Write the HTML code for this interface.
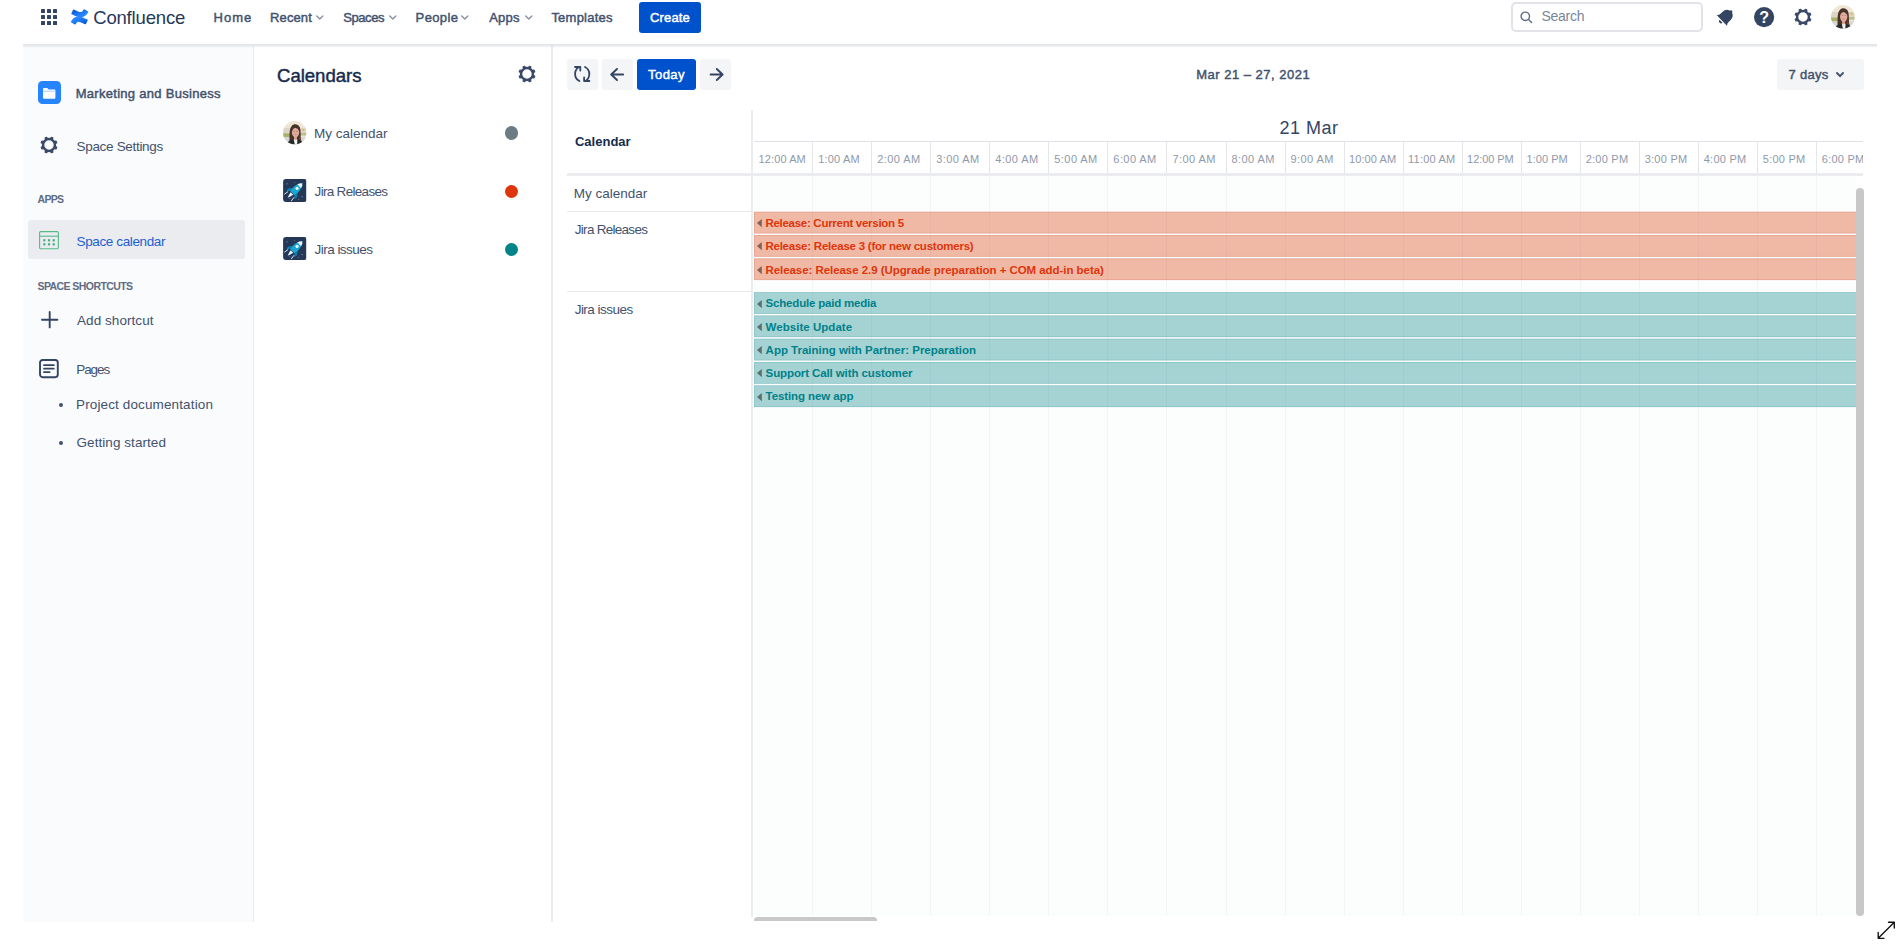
<!DOCTYPE html>
<html lang="en">
<head>
<meta charset="utf-8">
<title>Space calendar - Marketing and Business - Confluence</title>
<style>
*{box-sizing:border-box;margin:0;padding:0}
html,body{width:1901px;height:948px;overflow:hidden;background:#fff}
body{font-family:"Liberation Sans",sans-serif;-webkit-font-smoothing:antialiased}
#app{position:relative;width:1901px;height:948px;overflow:hidden;background:#fff}
#app>*,.abs{position:absolute}
.t{position:absolute;white-space:nowrap;display:block}
svg{position:absolute;display:block;overflow:visible}
.grp{position:absolute;left:0;top:0;width:0;height:0}
/* header */
#topbar{left:23px;top:44px;width:1854px;height:4px;z-index:5;background:linear-gradient(rgba(9,30,66,.115) 0,rgba(9,30,66,.105) 42%,rgba(9,30,66,.055) 62%,rgba(9,30,66,.02) 82%,rgba(9,30,66,0) 100%)}
.btn-primary{background:#0052cc;border-radius:3px}
.btn-subtle{background:#f4f5f7;border-radius:3px}
#search{left:1511px;top:2px;width:192.4px;height:30px;border:2px solid #e1e3e8;border-radius:5px;background:#fff}
/* sidebar */
#sidebar{left:23px;top:46px;width:230.5px;height:875.6px;background:#fafbfc;border-right:1px solid #eaebed}
#sel{left:28px;top:220px;width:216.6px;height:39px;background:#ebecf0;border-radius:3px}
.bullet{width:4px;height:4px;border-radius:50%;background:#42526e}
/* calendars panel */
#calpanel{left:253.5px;top:46px;width:299.5px;height:875.6px;background:#fff;border-right:2px solid #ebecf0}
.dot{width:13.5px;height:13.5px;border-radius:50%}
.appicon{width:24px;height:24px;border-radius:3px;background:#253858;overflow:hidden}
/* grid */
.hl{background:#ebecf0}
.ev{left:753.7px;width:1102.3px;height:21.3px}
.ev.r{background:#f0b8a5}
.ev.g{background:#a4d4d4}
</style>
</head>
<body>
<div id="app">
<svg width="0" height="0" style="left:0;top:0"><defs>
<symbol id="gear" viewBox="-10 -10 20 20" overflow="visible"><circle r="5.95" fill="none" stroke="currentColor" stroke-width="2.45"/><g fill="currentColor"><rect x="-1.55" y="-8.65" width="3.1" height="3" rx=".8" transform="rotate(22.5)"/><rect x="-1.55" y="-8.65" width="3.1" height="3" rx=".8" transform="rotate(67.5)"/><rect x="-1.55" y="-8.65" width="3.1" height="3" rx=".8" transform="rotate(112.5)"/><rect x="-1.55" y="-8.65" width="3.1" height="3" rx=".8" transform="rotate(157.5)"/><rect x="-1.55" y="-8.65" width="3.1" height="3" rx=".8" transform="rotate(202.5)"/><rect x="-1.55" y="-8.65" width="3.1" height="3" rx=".8" transform="rotate(247.5)"/><rect x="-1.55" y="-8.65" width="3.1" height="3" rx=".8" transform="rotate(292.5)"/><rect x="-1.55" y="-8.65" width="3.1" height="3" rx=".8" transform="rotate(337.5)"/></g></symbol>
<symbol id="chev" viewBox="0 0 8 6" overflow="visible"><path d="M0.8 1 L4 4.3 L7.2 1" fill="none" stroke="currentColor" stroke-width="1.5" stroke-linecap="round" stroke-linejoin="round"/></symbol>
<symbol id="rocket" viewBox="0 0 24 24"><rect width="24" height="24" fill="#253858"/>
<g fill="#fff" opacity=".55"><circle cx="4" cy="5" r=".6"/><circle cx="19.5" cy="18" r=".6"/><circle cx="7" cy="20" r=".5"/><circle cx="20" cy="7" r=".5"/><circle cx="12" cy="3.5" r=".4"/><circle cx="16" cy="21" r=".5"/></g>
<g transform="rotate(45 12 12) translate(12 12) scale(1.12) translate(-12 -12.3)"><path d="M12 2.5 C15 5.5 15.6 10 15 15.5 L9 15.5 C8.4 10 9 5.5 12 2.5Z" fill="#1ba7d4"/><path d="M12 2.5 C13.2 3.7 14 5 14.5 6.5 L9.5 6.5 C10 5 10.8 3.7 12 2.5Z" fill="#e9f6fb"/><circle cx="12" cy="9.3" r="1.5" fill="#e9f6fb"/><path d="M9 11.5 L6.3 15 L6.6 18 L9.2 15.5Z M15 11.5 L17.7 15 L17.4 18 L14.8 15.5Z" fill="#0c7fb0"/><path d="M10.3 16 L13.7 16 L12.9 19 L12 21.5 L11.1 19Z" fill="#e9f6fb"/><path d="M8.2 17.5 L7.6 21 M15.8 17.5 L16.4 21" stroke="#e9f6fb" stroke-width=".8" stroke-linecap="round"/></g></symbol>
<radialGradient id="skin" cx="50%" cy="45%" r="50%"><stop offset="0" stop-color="#d9a58c"/><stop offset="1" stop-color="#c48a72"/></radialGradient>
<filter id="avblur" x="-10%" y="-10%" width="120%" height="120%"><feGaussianBlur stdDeviation=".35"/></filter><clipPath id="avclip"><circle cx="12" cy="12" r="12"/></clipPath>
<symbol id="avatar" viewBox="0 0 24 24"><g clip-path="url(#avclip)"><g filter="url(#avblur)"><rect width="24" height="24" fill="#efe6d6"/><rect x="0" y="7" width="24" height="6" fill="#ddd5c6"/><rect x="0" y="12.6" width="9" height="4" fill="#a7b168"/><rect x="16" y="12.2" width="8" height="2.6" fill="#b9bc8c"/><rect x="0" y="16.4" width="24" height="8" fill="#d6d6d2"/><circle cx="20.8" cy="9" r="1.2" fill="#e8b45e"/>
<path d="M6.6 20.5 C6.8 15 6.2 9 8.2 6 C9.6 3.9 11.3 3.4 12.6 3.4 C14.2 3.4 16 4.2 17.1 6.4 C18.6 9.4 17.6 15 18.6 20.5Z" fill="#47322b"/>
<path d="M16.6 15 C17.4 17 18 19 18.9 20.6 L16 20.6Z" fill="#7a3f2a"/>
<rect x="11.2" y="15.5" width="3" height="4" fill="#d79f8e"/>
<ellipse cx="12.8" cy="11.6" rx="3.7" ry="5.2" fill="#e2aa9b"/>
<path d="M9 10.6 C9.1 7.4 10.6 5.6 12.8 5.6 C15 5.6 16.4 7.4 16.6 10.4 C15.6 8.6 14.6 7.3 12.4 7 C10.8 7.3 9.8 8.6 9 10.6Z" fill="#47322b"/>
<ellipse cx="11.4" cy="10.7" rx=".8" ry=".45" fill="#6b4a42" opacity=".7"/><ellipse cx="14.3" cy="10.7" rx=".8" ry=".45" fill="#6b4a42" opacity=".7"/><ellipse cx="12.9" cy="14.1" rx="1.3" ry=".5" fill="#c4736c" opacity=".8"/><path d="M3.5 24 C4.4 20.6 7.8 19.6 10.9 18.6 L12.7 21 L14.6 18.6 C17.6 19.6 20.4 20.6 21 24Z" fill="#29292c"/><path d="M10.9 18.6 L12 24 L14.4 24 L14.7 18.6 L12.8 19.3Z" fill="#f2f2f0"/></g></g></symbol>
</defs></svg>
<header class="grp">
<div id="topbar" class="abs"></div>
<svg style="left:41px;top:9px" width="16" height="16" viewBox="0 0 16 16" fill="#344563"><rect x="0" y="0" width="4" height="4" rx=".6"/><rect x="6" y="0" width="4" height="4" rx=".6"/><rect x="12" y="0" width="4" height="4" rx=".6"/><rect x="0" y="6" width="4" height="4" rx=".6"/><rect x="6" y="6" width="4" height="4" rx=".6"/><rect x="12" y="6" width="4" height="4" rx=".6"/><rect x="0" y="12" width="4" height="4" rx=".6"/><rect x="6" y="12" width="4" height="4" rx=".6"/><rect x="12" y="12" width="4" height="4" rx=".6"/></svg>
<svg style="left:67.8px;top:5.8px" width="23.1" height="21.85" viewBox="0 0 32 32" preserveAspectRatio="none"><defs><linearGradient x1="99.14%" y1="112.75%" x2="33.86%" y2="37.77%" id="cga"><stop stop-color="#0052CC" offset="18%"/><stop stop-color="#2684FF" offset="100%"/></linearGradient><linearGradient x1="0.93%" y1="-12.58%" x2="66.18%" y2="62.31%" id="cgb"><stop stop-color="#0052CC" offset="18%"/><stop stop-color="#2684FF" offset="100%"/></linearGradient></defs>
<path fill="url(#cga)" d="M4.75 21.61c-.25.42-.54.9-.78 1.28a.78.78 0 0 0 .26 1.07l5.08 3.12a.78.78 0 0 0 1.08-.26c.2-.34.47-.78.75-1.26 2.01-3.32 4.04-2.91 7.69-1.17l5.04 2.4a.78.78 0 0 0 1.05-.4l2.42-5.47a.78.78 0 0 0-.39-1.02c-1.06-.5-3.18-1.5-5.08-2.42-6.85-3.32-12.67-3.11-17.12 4.13z"/>
<path fill="url(#cgb)" d="M27.25 10.41c.25-.42.54-.9.78-1.28a.78.78 0 0 0-.26-1.07l-5.08-3.12a.78.78 0 0 0-1.11.26c-.2.34-.47.78-.75 1.26-2.01 3.32-4.04 2.91-7.69 1.17L8.11 5.24a.78.78 0 0 0-1.05.39l-2.42 5.47a.78.78 0 0 0 .39 1.02c1.06.5 3.18 1.5 5.08 2.42 6.87 3.32 12.69 3.1 17.14-4.13z"/></svg>
<span class="t" style="left:93.20px;top:5px;font-size:18.5px;line-height:25px;letter-spacing:-0.167px;color:#253858;">Confluence</span>
<nav class="grp">
<span class="t" style="left:213.60px;top:8px;font-size:13px;line-height:19px;letter-spacing:0.984px;color:#42526e;-webkit-text-stroke:0.45px;">Home</span>
<span class="t" style="left:270.10px;top:8px;font-size:13px;line-height:19px;letter-spacing:0.104px;color:#42526e;-webkit-text-stroke:0.45px;">Recent</span><svg style="left:316.3px;top:15px;color:#8993a4" width="7.6" height="5.7"><use href="#chev"/></svg>
<span class="t" style="left:343.20px;top:8px;font-size:13px;line-height:19px;letter-spacing:-0.412px;color:#42526e;-webkit-text-stroke:0.45px;">Spaces</span><svg style="left:388.9px;top:15px;color:#8993a4" width="7.6" height="5.7"><use href="#chev"/></svg>
<span class="t" style="left:415.60px;top:8px;font-size:13px;line-height:19px;letter-spacing:0.370px;color:#42526e;-webkit-text-stroke:0.45px;">People</span><svg style="left:461.4px;top:15px;color:#8993a4" width="7.6" height="5.7"><use href="#chev"/></svg>
<span class="t" style="left:489.20px;top:8px;font-size:13px;line-height:19px;letter-spacing:0.223px;color:#42526e;-webkit-text-stroke:0.45px;">Apps</span><svg style="left:524.6px;top:15px;color:#8993a4" width="7.6" height="5.7"><use href="#chev"/></svg>
<span class="t" style="left:551.40px;top:8px;font-size:13px;line-height:19px;letter-spacing:0.231px;color:#42526e;-webkit-text-stroke:0.45px;">Templates</span>
</nav>
<div class="abs btn-primary" style="left:638.5px;top:2px;width:62.5px;height:30.5px"></div><span class="t" style="left:650.00px;top:8px;font-size:13px;line-height:19px;letter-spacing:0.162px;color:#ffffff;-webkit-text-stroke:0.45px;">Create</span>
<div id="search" class="abs"></div>
<svg style="left:1519.5px;top:10.5px" width="13" height="13" viewBox="0 0 13 13" fill="none" stroke="#5e6c84" stroke-width="1.4" stroke-linecap="round"><circle cx="5.3" cy="5.3" r="4.2"/><path d="M8.5 8.5 L11.6 11.6"/></svg>
<span class="t" style="left:1541.50px;top:6px;font-size:14px;line-height:20px;letter-spacing:-0.274px;color:#7a869a;">Search</span>
<svg style="left:1715px;top:7px" width="20" height="20" viewBox="-10 -10 20 20" fill="#344563"><g transform="translate(.3 .2) rotate(46) scale(1.03)"><path d="M0 -9 C.9 -9 1.5 -8.4 1.5 -7.6 C4.3 -6.9 5.6 -4.6 5.6 -1.8 L5.6 2.2 L7 4.6 L-7 4.6 L-5.6 2.2 L-5.6 -1.8 C-5.6 -4.6 -4.3 -6.9 -1.5 -7.6 C-1.5 -8.4 -.9 -9 0 -9Z"/><path d="M-2 5.8 L2 5.8 A2 2 0 0 1 -2 5.8Z"/></g></svg>
<svg style="left:1753.8px;top:6.9px" width="20.2" height="20.2" viewBox="0 0 20 20"><circle cx="10" cy="10" r="10" fill="#344563"/><text x="10" y="15.7" text-anchor="middle" font-family="Liberation Sans, sans-serif" font-weight="700" font-size="16" fill="#fff">?</text></svg>
<svg style="left:1792.6px;top:6.9px;color:#3a4a68" width="20" height="20"><use href="#gear"/></svg>
<svg style="left:1831.1px;top:5.3px" width="23.8" height="23.8" viewBox="0 0 24 24"><use href="#avatar"/></svg>
</header>

<aside class="grp">
<div id="sidebar" class="abs"></div>
<div class="abs" style="left:37.5px;top:81px;width:23.5px;height:23.3px;border-radius:4.5px;background:#2684ff"></div>
<svg style="left:43px;top:87.5px" width="12.4" height="10.8" viewBox="0 0 12.4 10.8"><path d="M0 1 Q0 0 1 0 L4.2 0 L5.6 1.5 L11.4 1.5 Q12.4 1.5 12.4 2.5 L12.4 9.8 Q12.4 10.8 11.4 10.8 L1 10.8 Q0 10.8 0 9.8Z" fill="#fff"/><path d="M0 3.2 L12.4 3.2" stroke="#9cc7ff" stroke-width=".9"/></svg>
<span class="t" style="left:75.70px;top:84px;font-size:13px;line-height:19px;letter-spacing:0.289px;color:#42526e;-webkit-text-stroke:0.45px;">Marketing and Business</span>
<svg style="left:38.8px;top:134.6px;color:#3a4a68" width="20" height="20"><use href="#gear"/></svg>
<span class="t" style="left:76.50px;top:137px;font-size:13.5px;line-height:19px;letter-spacing:-0.312px;color:#42526e;">Space Settings</span>
<span class="t" style="left:37.60px;top:191px;font-size:10.5px;line-height:16px;letter-spacing:-0.730px;color:#5e6c84;font-weight:700;">APPS</span>
<div id="sel" class="abs"></div>
<svg style="left:39.2px;top:230.6px" width="20" height="18.4" viewBox="0 0 20 18.4" fill="none" stroke="#57b98a" stroke-width="1.1"><rect x=".6" y=".6" width="18.8" height="17.2" rx="1.2"/><path d="M.6 5.2 L19.4 5.2"/><g fill="#45b07c" stroke="none"><rect x="4.2" y="8.2" width="2.2" height="2.2"/><rect x="8.9" y="8.2" width="2.2" height="2.2"/><rect x="13.6" y="8.2" width="2.2" height="2.2"/><rect x="4.2" y="12.2" width="2.2" height="2.2"/><rect x="8.9" y="12.2" width="2.2" height="2.2"/><rect x="13.6" y="12.2" width="2.2" height="2.2"/></g></svg>
<span class="t" style="left:76.50px;top:232px;font-size:13.5px;line-height:19px;letter-spacing:-0.371px;color:#1c5fd1;">Space calendar</span>
<span class="t" style="left:37.50px;top:278px;font-size:10.5px;line-height:16px;letter-spacing:-0.575px;color:#5e6c84;font-weight:700;">SPACE SHORTCUTS</span>
<svg style="left:40.7px;top:310.8px" width="17.4" height="17.4" viewBox="0 0 17.4 17.4" stroke="#344563" stroke-width="1.9" stroke-linecap="round"><path d="M8.7 1 L8.7 16.4 M1 8.7 L16.4 8.7"/></svg>
<span class="t" style="left:77.00px;top:311px;font-size:13.5px;line-height:19px;letter-spacing:0.060px;color:#42526e;">Add shortcut</span>
<svg style="left:39.3px;top:358.8px" width="19.8" height="19.2" viewBox="0 0 19.8 19.2" fill="none" stroke="#344563" stroke-width="1.9" stroke-linecap="round"><rect x="1" y="1" width="17.8" height="17.2" rx="2.6"/><path d="M5 6.2 L14.8 6.2 M5 9.7 L14.8 9.7 M5 13.2 L10.6 13.2" stroke-width="1.8"/></svg>
<span class="t" style="left:76.20px;top:360px;font-size:13.5px;line-height:19px;letter-spacing:-1.057px;color:#42526e;">Pages</span>
<div class="abs bullet" style="left:58.9px;top:402.5px"></div><span class="t" style="left:76.00px;top:395px;font-size:13.5px;line-height:19px;letter-spacing:0.129px;color:#42526e;">Project documentation</span>
<div class="abs bullet" style="left:58.9px;top:441.1px"></div><span class="t" style="left:76.50px;top:433px;font-size:13.5px;line-height:19px;letter-spacing:0.061px;color:#42526e;">Getting started</span>
</aside>

<section class="grp">
<div id="calpanel" class="abs"></div>
<span class="t" style="left:277.00px;top:63px;font-size:18.6px;line-height:25px;letter-spacing:-0.032px;color:#172b4d;-webkit-text-stroke:0.45px;">Calendars</span>
<svg style="left:516.5px;top:64px;color:#3a4a68" width="20" height="20"><use href="#gear"/></svg>
<svg style="left:283.1px;top:120.9px" width="23.5" height="23.5" viewBox="0 0 24 24"><use href="#avatar"/></svg>
<span class="t" style="left:314.00px;top:124px;font-size:13.5px;line-height:19px;letter-spacing:-0.004px;color:#42526e;">My calendar</span>
<div class="abs dot" style="left:504.7px;top:126.3px;background:#6b7c85"></div>
<svg style="left:283.1px;top:178.6px;border-radius:3px;overflow:hidden" width="23.5" height="23.4" viewBox="0 0 24 24"><use href="#rocket"/></svg>
<span class="t" style="left:314.60px;top:182px;font-size:13.5px;line-height:19px;letter-spacing:-0.695px;color:#42526e;">Jira Releases</span>
<div class="abs dot" style="left:504.7px;top:184.5px;background:#de350b"></div>
<svg style="left:283.1px;top:236.8px;border-radius:3px;overflow:hidden" width="23.5" height="23.4" viewBox="0 0 24 24"><use href="#rocket"/></svg>
<span class="t" style="left:314.60px;top:240px;font-size:13.5px;line-height:19px;letter-spacing:-0.542px;color:#42526e;">Jira issues</span>
<div class="abs dot" style="left:504.7px;top:242.7px;background:#008489"></div>
</section>

<main class="grp">
<div class="abs btn-subtle" style="left:567.1px;top:59.1px;width:30.6px;height:30.5px"></div>
<svg style="left:574px;top:66.2px" width="16.4" height="16" viewBox="0 0 16.4 16" fill="none" stroke="#344563" stroke-width="1.8" stroke-linecap="round" stroke-linejoin="round"><path d="M5.4 15 C2.6 13.6 1.1 11.2 1.1 8 C1.1 5 2.4 2.6 4.6 1.2"/><path d="M1 1 L6.3 1 L6.3 4.6"/><path d="M11 1 C13.8 2.4 15.3 4.8 15.3 8 C15.3 11 14 13.4 11.8 14.8"/><path d="M15.4 15 L10.1 15 L10.1 11.4"/></svg>
<div class="abs btn-subtle" style="left:602px;top:59.1px;width:30.6px;height:30.5px"></div>
<svg style="left:609.9px;top:67.9px" width="14.8" height="13" viewBox="0 0 14.8 13" fill="none" stroke="#344563" stroke-width="1.9" stroke-linecap="round" stroke-linejoin="round"><path d="M13.2 6.5 L1.4 6.5 M7 1 L1.2 6.5 L7 12"/></svg>
<div class="abs btn-primary" style="left:636.6px;top:59.1px;width:59.8px;height:30.5px"></div>
<span class="t" style="left:648.00px;top:65px;font-size:13px;line-height:19px;letter-spacing:0.453px;color:#ffffff;-webkit-text-stroke:0.45px;">Today</span>
<div class="abs btn-subtle" style="left:700.4px;top:59.1px;width:30.6px;height:30.5px"></div>
<svg style="left:708.6px;top:67.9px" width="14.8" height="13" viewBox="0 0 14.8 13" fill="none" stroke="#344563" stroke-width="1.9" stroke-linecap="round" stroke-linejoin="round"><path d="M1.6 6.5 L13.4 6.5 M7.8 1 L13.6 6.5 L7.8 12"/></svg>
<span class="t" style="left:1196.30px;top:65px;font-size:13px;line-height:19px;letter-spacing:0.488px;color:#42526e;-webkit-text-stroke:0.45px;">Mar 21 – 27, 2021</span>
<div class="abs btn-subtle" style="left:1776.5px;top:59.1px;width:87px;height:30.5px"></div>
<span class="t" style="left:1788.60px;top:65px;font-size:13px;line-height:19px;letter-spacing:0.260px;color:#42526e;-webkit-text-stroke:0.45px;">7 days</span>
<svg style="left:1836.4px;top:72.2px;color:#42526e" width="8" height="6" viewBox="0 0 8 6" fill="none" stroke="#42526e" stroke-width="1.9" stroke-linecap="round" stroke-linejoin="round"><path d="M1 1 L4 4.2 L7 1"/></svg>
<span class="t" style="left:574.90px;top:132px;font-size:13px;line-height:19px;letter-spacing:0.018px;color:#172b4d;font-weight:700;">Calendar</span>
<span class="t" style="left:1279.60px;top:116px;font-size:18px;line-height:24px;letter-spacing:0.455px;color:#344563;">21 Mar</span>
<div class="abs" id="timeclip" style="left:753.7px;top:141px;width:1109.5px;height:33px;overflow:hidden"></div>
<div class="abs" style="left:753.7px;top:140.8px;width:1109.5px;height:1px;background:#dfe1e6"></div>
<div class="abs" style="left:812.24px;top:141.5px;width:1px;height:32px;background:#e4e6ea"></div>
<div class="abs" style="left:871.28px;top:141.5px;width:1px;height:32px;background:#e4e6ea"></div>
<div class="abs" style="left:930.32px;top:141.5px;width:1px;height:32px;background:#e4e6ea"></div>
<div class="abs" style="left:989.36px;top:141.5px;width:1px;height:32px;background:#e4e6ea"></div>
<div class="abs" style="left:1048.40px;top:141.5px;width:1px;height:32px;background:#e4e6ea"></div>
<div class="abs" style="left:1107.44px;top:141.5px;width:1px;height:32px;background:#e4e6ea"></div>
<div class="abs" style="left:1166.48px;top:141.5px;width:1px;height:32px;background:#e4e6ea"></div>
<div class="abs" style="left:1225.52px;top:141.5px;width:1px;height:32px;background:#e4e6ea"></div>
<div class="abs" style="left:1284.56px;top:141.5px;width:1px;height:32px;background:#e4e6ea"></div>
<div class="abs" style="left:1343.60px;top:141.5px;width:1px;height:32px;background:#e4e6ea"></div>
<div class="abs" style="left:1402.64px;top:141.5px;width:1px;height:32px;background:#e4e6ea"></div>
<div class="abs" style="left:1461.68px;top:141.5px;width:1px;height:32px;background:#e4e6ea"></div>
<div class="abs" style="left:1520.72px;top:141.5px;width:1px;height:32px;background:#e4e6ea"></div>
<div class="abs" style="left:1579.76px;top:141.5px;width:1px;height:32px;background:#e4e6ea"></div>
<div class="abs" style="left:1638.80px;top:141.5px;width:1px;height:32px;background:#e4e6ea"></div>
<div class="abs" style="left:1697.84px;top:141.5px;width:1px;height:32px;background:#e4e6ea"></div>
<div class="abs" style="left:1756.88px;top:141.5px;width:1px;height:32px;background:#e4e6ea"></div>
<div class="abs" style="left:1815.92px;top:141.5px;width:1px;height:32px;background:#e4e6ea"></div>
<span class="t tl" style="left:758.60px;top:151px;font-size:11px;line-height:16px;letter-spacing:0.097px;color:#8f99a9;">12:00 AM</span>
<span class="t tl" style="left:818.14px;top:151px;font-size:11px;line-height:16px;letter-spacing:0.200px;color:#8f99a9;">1:00 AM</span>
<span class="t tl" style="left:877.18px;top:151px;font-size:11px;line-height:16px;letter-spacing:0.433px;color:#8f99a9;">2:00 AM</span>
<span class="t tl" style="left:936.22px;top:151px;font-size:11px;line-height:16px;letter-spacing:0.433px;color:#8f99a9;">3:00 AM</span>
<span class="t tl" style="left:995.26px;top:151px;font-size:11px;line-height:16px;letter-spacing:0.433px;color:#8f99a9;">4:00 AM</span>
<span class="t tl" style="left:1054.30px;top:151px;font-size:11px;line-height:16px;letter-spacing:0.433px;color:#8f99a9;">5:00 AM</span>
<span class="t tl" style="left:1113.34px;top:151px;font-size:11px;line-height:16px;letter-spacing:0.433px;color:#8f99a9;">6:00 AM</span>
<span class="t tl" style="left:1172.38px;top:151px;font-size:11px;line-height:16px;letter-spacing:0.433px;color:#8f99a9;">7:00 AM</span>
<span class="t tl" style="left:1231.42px;top:151px;font-size:11px;line-height:16px;letter-spacing:0.433px;color:#8f99a9;">8:00 AM</span>
<span class="t tl" style="left:1290.46px;top:151px;font-size:11px;line-height:16px;letter-spacing:0.433px;color:#8f99a9;">9:00 AM</span>
<span class="t tl" style="left:1349.00px;top:151px;font-size:11px;line-height:16px;letter-spacing:0.097px;color:#8f99a9;">10:00 AM</span>
<span class="t tl" style="left:1408.04px;top:151px;font-size:11px;line-height:16px;letter-spacing:0.214px;color:#8f99a9;">11:00 AM</span>
<span class="t tl" style="left:1467.08px;top:151px;font-size:11px;line-height:16px;letter-spacing:-0.060px;color:#8f99a9;">12:00 PM</span>
<span class="t tl" style="left:1526.62px;top:151px;font-size:11px;line-height:16px;letter-spacing:0.016px;color:#8f99a9;">1:00 PM</span>
<span class="t tl" style="left:1585.66px;top:151px;font-size:11px;line-height:16px;letter-spacing:0.250px;color:#8f99a9;">2:00 PM</span>
<span class="t tl" style="left:1644.70px;top:151px;font-size:11px;line-height:16px;letter-spacing:0.250px;color:#8f99a9;">3:00 PM</span>
<span class="t tl" style="left:1703.74px;top:151px;font-size:11px;line-height:16px;letter-spacing:0.250px;color:#8f99a9;">4:00 PM</span>
<span class="t tl" style="left:1762.78px;top:151px;font-size:11px;line-height:16px;letter-spacing:0.250px;color:#8f99a9;">5:00 PM</span>
<span class="t tl" style="left:1821.82px;top:151px;font-size:11px;line-height:16px;letter-spacing:0.250px;color:#8f99a9;">6:00 PM</span>
<div class="abs" style="left:1863.2px;top:141px;width:14px;height:33px;background:#fff"></div>
<div class="abs hl" style="left:567px;top:173.2px;width:1296.2px;height:2.6px"></div>
<div class="abs" style="left:753.7px;top:175.8px;width:1102.3px;height:739.8px;background:#fcfdfd"></div>
<svg style="left:753.7px;top:211px" width="1102.3" height="198" viewBox="0 0 1102.3 198"><rect x="0" y="0.7" width="1102.3" height="21.8" fill="#e8a590"/><rect x="0.9" y="1.6" width="1102.3" height="20.0" fill="#f0b9a6"/><rect x="0" y="24.0" width="1102.3" height="21.8" fill="#e8a590"/><rect x="0.9" y="24.9" width="1102.3" height="20.0" fill="#f0b9a6"/><rect x="0" y="47.3" width="1102.3" height="21.8" fill="#e8a590"/><rect x="0.9" y="48.2" width="1102.3" height="20.0" fill="#f0b9a6"/><rect x="0" y="81.1" width="1102.3" height="21.8" fill="#8ec6c9"/><rect x="0.9" y="82.0" width="1102.3" height="20.0" fill="#a5d3d4"/><rect x="0" y="104.4" width="1102.3" height="21.8" fill="#8ec6c9"/><rect x="0.9" y="105.3" width="1102.3" height="20.0" fill="#a5d3d4"/><rect x="0" y="127.7" width="1102.3" height="21.8" fill="#8ec6c9"/><rect x="0.9" y="128.6" width="1102.3" height="20.0" fill="#a5d3d4"/><rect x="0" y="151.0" width="1102.3" height="21.8" fill="#8ec6c9"/><rect x="0.9" y="151.9" width="1102.3" height="20.0" fill="#a5d3d4"/><rect x="0" y="174.3" width="1102.3" height="21.8" fill="#8ec6c9"/><rect x="0.9" y="175.2" width="1102.3" height="20.0" fill="#a5d3d4"/></svg>
<span class="t" style="left:573.80px;top:184px;font-size:13.5px;line-height:19px;letter-spacing:-0.004px;color:#42526e;">My calendar</span>
<div class="abs" style="left:567px;top:210.9px;width:184.5px;height:1px;background:#e6e8ec"></div>
<span class="t" style="left:574.80px;top:220px;font-size:13.5px;line-height:19px;letter-spacing:-0.720px;color:#42526e;">Jira Releases</span>
<div class="abs" style="left:567px;top:290.9px;width:184.5px;height:1px;background:#e6e8ec"></div>
<span class="t" style="left:574.70px;top:300px;font-size:13.5px;line-height:19px;letter-spacing:-0.532px;color:#42526e;">Jira issues</span>
<svg style="left:756.8px;top:219.1px" width="4.8" height="8.2" viewBox="0 0 4.8 8.2"><path d="M4.8 0 L4.8 8.2 L0 4.1Z" fill="rgba(20,10,5,.5)"/></svg><span class="t" style="left:765.40px;top:215px;font-size:11.5px;line-height:16px;letter-spacing:-0.281px;color:#de350b;font-weight:700;">Release: Current version 5</span>
<svg style="left:756.8px;top:242.4px" width="4.8" height="8.2" viewBox="0 0 4.8 8.2"><path d="M4.8 0 L4.8 8.2 L0 4.1Z" fill="rgba(20,10,5,.5)"/></svg><span class="t" style="left:765.40px;top:238px;font-size:11.5px;line-height:16px;letter-spacing:-0.228px;color:#de350b;font-weight:700;">Release: Release 3 (for new customers)</span>
<svg style="left:756.8px;top:265.7px" width="4.8" height="8.2" viewBox="0 0 4.8 8.2"><path d="M4.8 0 L4.8 8.2 L0 4.1Z" fill="rgba(20,10,5,.5)"/></svg><span class="t" style="left:765.40px;top:262px;font-size:11.5px;line-height:16px;letter-spacing:-0.053px;color:#de350b;font-weight:700;">Release: Release 2.9 (Upgrade preparation + COM add-in beta)</span>
<svg style="left:756.8px;top:299.5px" width="4.8" height="8.2" viewBox="0 0 4.8 8.2"><path d="M4.8 0 L4.8 8.2 L0 4.1Z" fill="rgba(20,10,5,.5)"/></svg><span class="t" style="left:765.60px;top:295px;font-size:11.5px;line-height:16px;letter-spacing:-0.194px;color:#008189;font-weight:700;">Schedule paid media</span>
<svg style="left:756.8px;top:322.8px" width="4.8" height="8.2" viewBox="0 0 4.8 8.2"><path d="M4.8 0 L4.8 8.2 L0 4.1Z" fill="rgba(20,10,5,.5)"/></svg><span class="t" style="left:765.60px;top:319px;font-size:11.5px;line-height:16px;letter-spacing:0.034px;color:#008189;font-weight:700;">Website Update</span>
<svg style="left:756.8px;top:346.1px" width="4.8" height="8.2" viewBox="0 0 4.8 8.2"><path d="M4.8 0 L4.8 8.2 L0 4.1Z" fill="rgba(20,10,5,.5)"/></svg><span class="t" style="left:765.60px;top:342px;font-size:11.5px;line-height:16px;letter-spacing:-0.012px;color:#008189;font-weight:700;">App Training with Partner: Preparation</span>
<svg style="left:756.8px;top:369.4px" width="4.8" height="8.2" viewBox="0 0 4.8 8.2"><path d="M4.8 0 L4.8 8.2 L0 4.1Z" fill="rgba(20,10,5,.5)"/></svg><span class="t" style="left:765.60px;top:365px;font-size:11.5px;line-height:16px;letter-spacing:-0.105px;color:#008189;font-weight:700;">Support Call with customer</span>
<svg style="left:756.8px;top:392.7px" width="4.8" height="8.2" viewBox="0 0 4.8 8.2"><path d="M4.8 0 L4.8 8.2 L0 4.1Z" fill="rgba(20,10,5,.5)"/></svg><span class="t" style="left:765.60px;top:388px;font-size:11.5px;line-height:16px;letter-spacing:-0.094px;color:#008189;font-weight:700;">Testing new app</span>
<div class="abs" style="left:812.24px;top:175.8px;width:1px;height:739.8px;background:rgba(9,30,66,.035)"></div>
<div class="abs" style="left:871.28px;top:175.8px;width:1px;height:739.8px;background:rgba(9,30,66,.035)"></div>
<div class="abs" style="left:930.32px;top:175.8px;width:1px;height:739.8px;background:rgba(9,30,66,.035)"></div>
<div class="abs" style="left:989.36px;top:175.8px;width:1px;height:739.8px;background:rgba(9,30,66,.035)"></div>
<div class="abs" style="left:1048.40px;top:175.8px;width:1px;height:739.8px;background:rgba(9,30,66,.035)"></div>
<div class="abs" style="left:1107.44px;top:175.8px;width:1px;height:739.8px;background:rgba(9,30,66,.035)"></div>
<div class="abs" style="left:1166.48px;top:175.8px;width:1px;height:739.8px;background:rgba(9,30,66,.035)"></div>
<div class="abs" style="left:1225.52px;top:175.8px;width:1px;height:739.8px;background:rgba(9,30,66,.035)"></div>
<div class="abs" style="left:1284.56px;top:175.8px;width:1px;height:739.8px;background:rgba(9,30,66,.035)"></div>
<div class="abs" style="left:1343.60px;top:175.8px;width:1px;height:739.8px;background:rgba(9,30,66,.035)"></div>
<div class="abs" style="left:1402.64px;top:175.8px;width:1px;height:739.8px;background:rgba(9,30,66,.035)"></div>
<div class="abs" style="left:1461.68px;top:175.8px;width:1px;height:739.8px;background:rgba(9,30,66,.035)"></div>
<div class="abs" style="left:1520.72px;top:175.8px;width:1px;height:739.8px;background:rgba(9,30,66,.035)"></div>
<div class="abs" style="left:1579.76px;top:175.8px;width:1px;height:739.8px;background:rgba(9,30,66,.035)"></div>
<div class="abs" style="left:1638.80px;top:175.8px;width:1px;height:739.8px;background:rgba(9,30,66,.035)"></div>
<div class="abs" style="left:1697.84px;top:175.8px;width:1px;height:739.8px;background:rgba(9,30,66,.035)"></div>
<div class="abs" style="left:1756.88px;top:175.8px;width:1px;height:739.8px;background:rgba(9,30,66,.035)"></div>
<div class="abs" style="left:1815.92px;top:175.8px;width:1px;height:739.8px;background:rgba(9,30,66,.035)"></div>
<div class="abs hl" style="left:751.2px;top:109.6px;width:2.3px;height:807px"></div>
<div class="abs" style="left:1856px;top:187.5px;width:7.5px;height:728px;border-radius:3.75px;background:#c8c8c8"></div>
<div class="abs" style="left:754px;top:917px;width:122.5px;height:4px;border-radius:3.5px 3.5px 0 0;background:#c8c8c8"></div>
<svg style="left:1876.5px;top:920.5px" width="18.5" height="18.5" viewBox="0 0 18.5 18.5" fill="none" stroke="#111" stroke-width="1.35" stroke-linecap="round" stroke-linejoin="round"><path d="M1.2 17.3 L17.3 1.2 M11.5 1.2 L17.3 1.2 L17.3 7 M1.2 11.5 L1.2 17.3 L7 17.3"/></svg>
</main>

</div>
</body>
</html>
